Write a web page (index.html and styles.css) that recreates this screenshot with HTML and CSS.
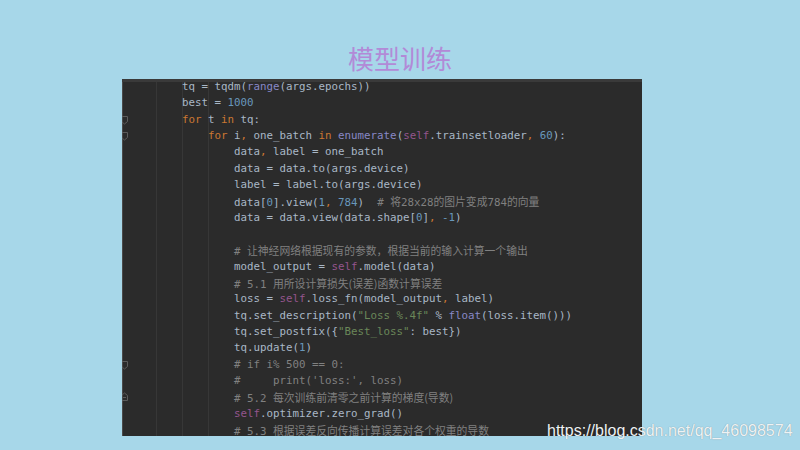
FILE: index.html
```html
<!DOCTYPE html>
<html lang="zh">
<head>
<meta charset="utf-8">
<title>模型训练</title>
<link rel="stylesheet" href="styles.css">
</head>
<body>
<div class="slide">
  <h1 class="title">模型训练</h1>
  <div class="editor">
    <div class="line"><span class="gut"></span><span class="code">        tq = tqdm(<span class="bi">range</span>(args.epochs))</span></div>
    <div class="line"><span class="gut"></span><span class="code">        best = <span class="num">1000</span></span></div>
    <div class="line"><span class="gut"><svg class="fold" width="8" height="10" viewBox="0 0 8 10"><path d="M0.5 1.5H6.5V6.5L3.5 9L0.5 6.5Z" fill="none" stroke="#5c5c5c"/></svg></span><span class="code">        <span class="kw">for</span> t <span class="kw">in</span> tq:</span></div>
    <div class="line"><span class="gut"><svg class="fold" width="8" height="10" viewBox="0 0 8 10"><path d="M0.5 1.5H6.5V6.5L3.5 9L0.5 6.5Z" fill="none" stroke="#5c5c5c"/></svg></span><span class="code">            <span class="kw">for</span> i<span class="kw">,</span> one_batch <span class="kw">in</span> <span class="bi">enumerate</span>(<span class="self">self</span>.trainsetloader<span class="kw">,</span> <span class="num">60</span>):</span></div>
    <div class="line"><span class="gut"></span><span class="code">                data<span class="kw">,</span> label = one_batch</span></div>
    <div class="line"><span class="gut"></span><span class="code">                data = data.to(args.device)</span></div>
    <div class="line"><span class="gut"></span><span class="code">                label = label.to(args.device)</span></div>
    <div class="line"><span class="gut"></span><span class="code">                data[<span class="num">0</span>].view(<span class="num">1</span><span class="kw">,</span> <span class="num">784</span>)  <span class="cm"># <span class="cjk">将</span>28x28<span class="cjk">的图片变成</span>784<span class="cjk">的向量</span></span></span></div>
    <div class="line"><span class="gut"></span><span class="code">                data = data.view(data.shape[<span class="num">0</span>]<span class="kw">,</span> <span class="num">-1</span>)</span></div>
    <div class="line"><span class="gut"></span><span class="code"> </span></div>
    <div class="line"><span class="gut"></span><span class="code">                <span class="cm"># <span class="cjk">让神经网络根据现有的参数，根据当前的输入计算一个输出</span></span></span></div>
    <div class="line"><span class="gut"></span><span class="code">                model_output = <span class="self">self</span>.model(data)</span></div>
    <div class="line"><span class="gut"></span><span class="code">                <span class="cm"># 5.1 <span class="cjk">用所设计算损失(误差)函数计算误差</span></span></span></div>
    <div class="line"><span class="gut"></span><span class="code">                loss = <span class="self">self</span>.loss_fn(model_output<span class="kw">,</span> label)</span></div>
    <div class="line"><span class="gut"></span><span class="code">                tq.set_description(<span class="str">"Loss %.4f"</span> % <span class="bi">float</span>(loss.item()))</span></div>
    <div class="line"><span class="gut"></span><span class="code">                tq.set_postfix({<span class="str">"Best_loss"</span>: best})</span></div>
    <div class="line"><span class="gut"></span><span class="code">                tq.update(<span class="num">1</span>)</span></div>
    <div class="line"><span class="gut"><svg class="fold" width="8" height="10" viewBox="0 0 8 10"><path d="M0.5 1.5H6.5V6.5L3.5 9L0.5 6.5Z" fill="none" stroke="#5c5c5c"/></svg></span><span class="code">                <span class="cm"># if i% 500 == 0:</span></span></div>
    <div class="line"><span class="gut"></span><span class="code">                <span class="cm">#     print('loss:', loss)</span></span></div>
    <div class="line"><span class="gut"><svg class="fold" width="8" height="10" viewBox="0 0 8 10"><path d="M0.5 8.5H6.5V3.5L3.5 1L0.5 3.5Z" fill="none" stroke="#5c5c5c"/><path d="M2 5.5H5" stroke="#5c5c5c"/></svg></span><span class="code">                <span class="cm"># 5.2 <span class="cjk">每次训练前清零之前计算的梯度(导数)</span></span></span></div>
    <div class="line"><span class="gut"></span><span class="code">                <span class="self">self</span>.optimizer.zero_grad()</span></div>
    <div class="line"><span class="gut"></span><span class="code">                <span class="cm"># 5.3 <span class="cjk">根据误差反向传播计算误差对各个权重的导数</span></span></span></div>
  </div>
  <div class="watermark">https://blog.csdn.net/qq_46098574</div>
</div>
</body>
</html>
```
FILE: styles.css
```css
html, body {
  margin: 0;
  padding: 0;
}
body {
  width: 800px;
  height: 450px;
  overflow: hidden;
  background: #a7d7e9;
}
.slide {
  position: relative;
  width: 800px;
  height: 450px;
  box-sizing: border-box;
  padding: 43px 0 0 0;
  display: flex;
  flex-direction: column;
}
.title {
  margin: 0 0 6px 0;
  height: 30px;
  line-height: 30px;
  text-align: center;
  font-family: "Noto Sans CJK SC", sans-serif;
  font-weight: 400;
  font-size: 26px;
  color: #b28ad7;
}
.editor {
  margin-left: 122px;
  width: 520px;
  height: 357px;
  overflow: hidden;
  background-color: #2b2b2b;
  background-image:
    linear-gradient(#373737, #373737),
    linear-gradient(#373737, #373737),
    linear-gradient(#373737, #373737);
  background-size: 1px 100%, 1px 100%, 1px 100%;
  background-position: 34px 0, 60px 0, 86px 0;
  background-repeat: no-repeat;
  box-shadow: inset 0 3px 0 #3a3a3a, inset 1px 0 0 #4a4a4a;
  font-family: "DejaVu Sans Mono", monospace;
  font-size: 10.8px;
  color: #a9b7c6;
}
.line {
  display: flex;
  height: 16.33px;
  line-height: 16.33px;
}
.gut {
  flex: 0 0 8px;
  width: 8px;
  display: flex;
  align-items: center;
  overflow: hidden;
}
.fold {
  display: block;
  margin-left: -1px;
}
.code {
  white-space: pre;
}
.kw { color: #cc7832; }
.num { color: #6897bb; }
.str { color: #6a8759; }
.self { color: #94558d; }
.bi { color: #8888c6; }
.cm { color: #808080; }
.cjk {
  font-family: "Noto Sans CJK SC", sans-serif;
  font-size: 10.8px;
}
.watermark {
  position: absolute;
  left: 547px;
  top: 423px;
  font-family: "Liberation Sans", Arial, sans-serif;
  font-size: 16px;
  line-height: 16px;
  color: #eef2f4;
  text-shadow: 0 0 1px rgba(0, 0, 0, 0.35);
}
```
